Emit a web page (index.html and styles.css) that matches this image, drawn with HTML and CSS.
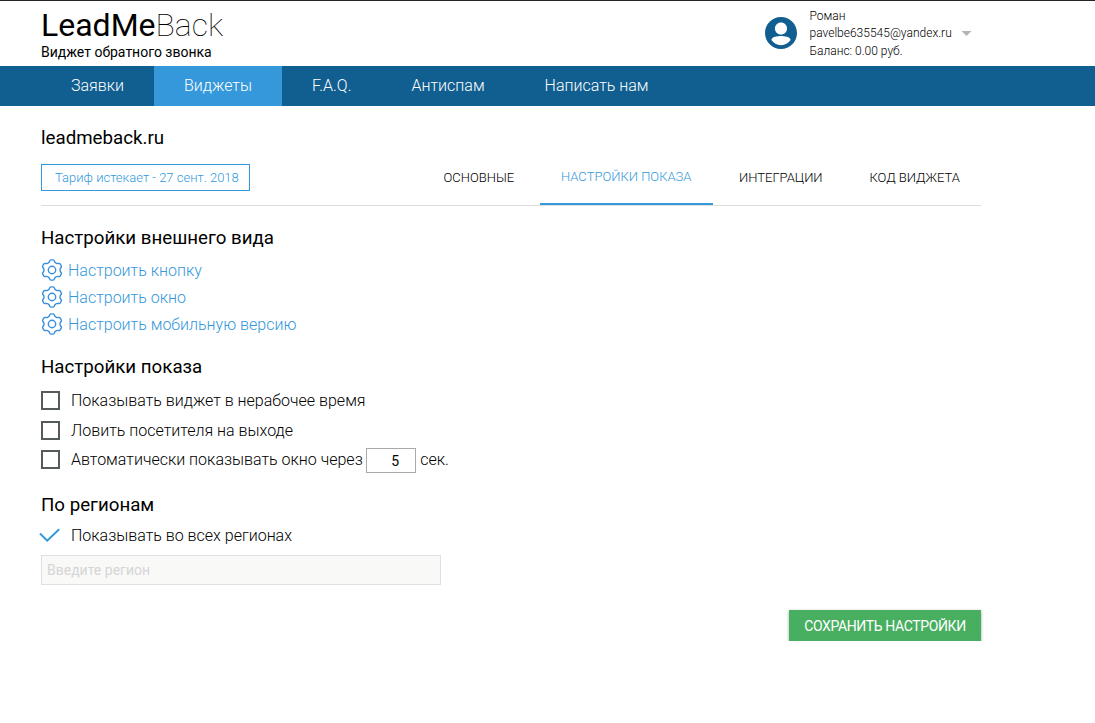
FILE: index.html
```html
<!DOCTYPE html>
<html lang="ru">
<head>
<meta charset="utf-8">
<title>LeadMeBack</title>
<link rel="stylesheet" href="styles.css">
</head>
<body>
<svg class="defs" width="0" height="0">
  <path id="tooth" d="M7 4.070Q8.400 3.300 8.600 2.100Q8.800.9 10 .9H12Q13.200.9 13.400 2.100Q13.600 3.300 15 4.070"/>
  <symbol id="gear" viewBox="0 0 22 22">
    <use href="#tooth"/>
    <use href="#tooth" transform="rotate(60 11 11)"/>
    <use href="#tooth" transform="rotate(120 11 11)"/>
    <use href="#tooth" transform="rotate(180 11 11)"/>
    <use href="#tooth" transform="rotate(240 11 11)"/>
    <use href="#tooth" transform="rotate(300 11 11)"/>
    <circle cx="11" cy="11" r="3.7"/>
  </symbol>
</svg>
<header class="header">
  <div class="brand">
    <div class="logo">LeadMe<span class="logo-thin">Back</span></div>
    <div class="slogan">Виджет обратного звонка</div>
  </div>
  <div class="user">
    <svg class="avatar" viewBox="2 2 20 20"><path d="M12 2C6.480 2 2 6.480 2 12s4.480 10 10 10 10-4.480 10-10S17.520 2 12 2zm0 3.400c2.100 0 3.800 1.700 3.800 3.800S14.100 13 12 13 8.200 11.300 8.200 9.200 9.900 5.400 12 5.400zm0 14.200c-2.500 0-4.710-1.280-6-3.220.03-1.990 4-2.480 6-2.480s5.970.49 6 2.480c-1.290 1.940-3.500 3.220-6 3.220z"/></svg>
    <div class="user-info">
      <div class="user-name">Роман</div>
      <div class="user-mail">pavelbe635545@yandex.ru</div>
      <div class="user-balance">Баланс: 0.00 руб.</div>
    </div>
    <span class="caret"></span>
  </div>
</header>
<nav class="nav">
  <a class="nav-item">Заявки</a>
  <a class="nav-item nav-active">Виджеты</a>
  <a class="nav-item">F.A.Q.</a>
  <a class="nav-item">Антиспам</a>
  <a class="nav-item">Написать нам</a>
</nav>
<main class="main">
  <h1 class="title site">leadmeback.ru</h1>
  <div class="toolbar">
    <div class="tariff">Тариф истекает - 27 сент. 2018</div>
    <div class="tabs">
      <a class="tab tab-main">ОСНОВНЫЕ</a>
      <a class="tab tab-show">НАСТРОЙКИ ПОКАЗА</a>
      <a class="tab tab-int">ИНТЕГРАЦИИ</a>
      <a class="tab tab-code">КОД ВИДЖЕТА</a>
    </div>
  </div>
  <h2 class="title look">Настройки внешнего вида</h2>
  <div class="links">
    <a class="link"><svg class="gear"><use href="#gear"/></svg><span>Настроить кнопку</span></a>
    <a class="link"><svg class="gear"><use href="#gear"/></svg><span>Настроить окно</span></a>
    <a class="link"><svg class="gear"><use href="#gear"/></svg><span>Настроить мобильную версию</span></a>
  </div>
  <h2 class="title display">Настройки показа</h2>
  <div class="options">
    <div class="option"><span class="box"></span><span>Показывать виджет в нерабочее время</span></div>
    <div class="option"><span class="box"></span><span>Ловить посетителя на выходе</span></div>
    <div class="option option-auto"><span class="box"></span><span>Автоматически показывать окно через</span><span class="seconds">5</span><span>сек.</span></div>
  </div>
  <h2 class="title regions">По регионам</h2>
  <div class="option option-regions"><svg class="check" viewBox="0 0 22 16"><path d="M1 5.500 8.200 12.700 20.200 1.200"/></svg><span>Показывать во всех регионах</span></div>
  <div class="region-input">Введите регион</div>
  <div class="actions"><button class="save">СОХРАНИТЬ НАСТРОЙКИ</button></div>
</main>
</body>
</html>
```
FILE: styles.css
```css
* { box-sizing: border-box; }
body { margin: 0; font-family: Roboto, "Open Sans", sans-serif; font-weight: 300; font-size: 16px; color: #000; background: #fff; white-space: nowrap; }
.defs { display: block; }
.header { height: 66px; width: 1095px; border-top: 1px solid #222427; display: flex; padding-left: 41px; }
.brand { width: 724px; }
.logo { font-size: 32px; line-height: 38px; height: 42px; padding-top: 5px; font-weight: 400; }
.logo-thin { font-weight: 100; }
.slogan { font-size: 14px; line-height: 18px; font-weight: 400; }
.user { display: flex; }
.avatar { width: 32px; height: 32px; margin: 16px 12.500px 0 0; fill: #115e90; }
.user-info { width: 152px; padding-top: 7px; font-size: 12px; line-height: 17.400px; }
.caret { width: 10px; height: 5px; margin-top: 30px; background: #b3b3b3; clip-path: polygon(0 0, 100% 0, 50% 100%); }
.nav { height: 40px; background: #115e90; padding-left: 41px; display: flex; color: #fff; line-height: 39px; }
.nav-item { padding: 0 30px; }
.nav-active { background: #3498db; }
.main { width: 940px; margin-left: 41px; }
.title { margin: 0; font-size: 18.720px; line-height: 24px; font-weight: 400; }
.site { padding-top: 20px; height: 58px; }
.toolbar { height: 42px; border-bottom: 1px solid #ddd; display: flex; justify-content: space-between; }
.tariff { width: 209px; height: 27px; border: 1px solid #3498db; padding-left: 13px; font-size: 13px; line-height: 25px; color: #3498db; }
.tabs { display: flex; font-size: 13px; line-height: 27px; }
.tab { height: 41px; padding: 0 21px; }
.tab-main { width: 118px; padding-left: 21.500px; }
.tab-show { width: 173px; color: #3498db; border-bottom: 2px solid #3498db; line-height: 25px; }
.tab-int { width: 131px; padding-left: 26px; }
.tab-code { width: 137px; padding-left: 25.500px; }
.look { margin-top: 20px; }
.links { margin-top: 7px; }
.link { display: flex; align-items: center; height: 27px; color: #3498db; gap: 5px; }
.gear { width: 22px; height: 22px; margin-top: -2px; fill: none; stroke: #3a8fdc; stroke-width: 1.400; }
.display { margin-top: 17px; }
.options { margin-top: 6px; }
.option { height: 30px; display: flex; align-items: center; }
.box { width: 19px; height: 19px; border: 2px solid #555a5a; margin-right: 11px; }
.option-auto { height: 29px; }
.seconds { width: 50px; height: 25px; border: 1px solid #a9a9a9; margin: 2px 4.500px 0 3px; padding-left: 24.500px; font-size: 14px; line-height: 24px; font-weight: 400; }
.regions { margin-top: 19px; }
.option-regions { height: 37px; }
.check { width: 22px; height: 16px; margin: 0 10px 0 -2px; fill: none; stroke: #3498db; stroke-width: 2; }
.region-input { width: 400px; height: 30px; margin-top: 1px; border: 1px solid #e0e0e0; background: #f9f9f8; color: #d5d5d5; font-size: 14px; line-height: 28px; padding-left: 5px; font-weight: 400; }
.actions { display: flex; justify-content: flex-end; margin-top: 25px; }
.save { width: 192px; height: 31px; border: 0; padding: 0; background: #48af61; color: #fff; font: 400 14px/30px Roboto, sans-serif; letter-spacing: -.38px; box-shadow: 0 1px 3px rgba(0,0,0,.35); }
```
